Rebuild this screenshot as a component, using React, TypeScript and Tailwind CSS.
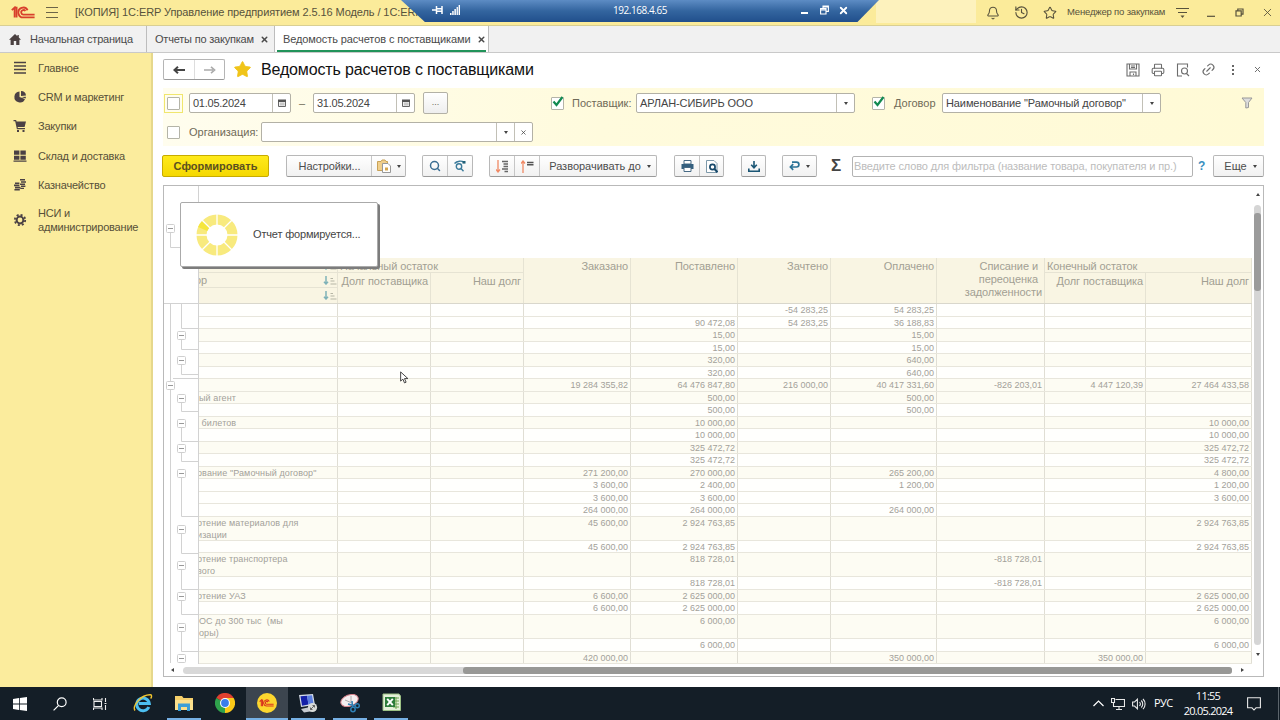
import type { ReactNode } from "react";
import { Bell, History, Link2, Printer, Search, Star, X } from "lucide-react";
import clsx from "clsx";

type Row = {
  h: 12 | 13 | 24;
  tint?: boolean;
  name?: string;
  scrolled?: boolean;
  cells: string[];
};

const columns = [
  "w-[93px]",
  "w-[93px]",
  "w-[107px]",
  "w-[107px]",
  "w-[93px]",
  "w-[106px]",
  "w-[108px]",
  "w-[101px]",
  "w-[106px]",
];

const rows: Row[] = [
  { h: 13, cells: ["", "", "", "", "-54 283,25", "54 283,25", "", "", ""] },
  { h: 12, cells: ["", "", "", "90 472,08", "54 283,25", "36 188,83", "", "", ""] },
  { h: 13, tint: true, cells: ["", "", "", "15,00", "", "15,00", "", "", ""] },
  { h: 12, cells: ["", "", "", "15,00", "", "15,00", "", "", ""] },
  { h: 13, tint: true, cells: ["", "", "", "320,00", "", "640,00", "", "", ""] },
  { h: 12, cells: ["", "", "", "320,00", "", "640,00", "", "", ""] },
  { h: 13, tint: true, cells: ["", "", "19 284 355,82", "64 476 847,80", "216 000,00", "40 417 331,60", "-826 203,01", "4 447 120,39", "27 464 433,58"] },
  { h: 12, tint: true, name: "ый агент", cells: ["", "", "", "500,00", "", "500,00", "", "", ""] },
  { h: 13, cells: ["", "", "", "500,00", "", "500,00", "", "", ""] },
  { h: 12, tint: true, name: " билетов", cells: ["", "", "", "10 000,00", "", "", "", "", "10 000,00"] },
  { h: 13, cells: ["", "", "", "10 000,00", "", "", "", "", "10 000,00"] },
  { h: 12, tint: true, cells: ["", "", "", "325 472,72", "", "", "", "", "325 472,72"] },
  { h: 13, cells: ["", "", "", "325 472,72", "", "", "", "", "325 472,72"] },
  { h: 12, tint: true, scrolled: true, name: "ование \"Рамочный договор\"", cells: ["", "", "271 200,00", "270 000,00", "", "265 200,00", "", "", "4 800,00"] },
  { h: 13, cells: ["", "", "3 600,00", "2 400,00", "", "1 200,00", "", "", "1 200,00"] },
  { h: 12, cells: ["", "", "3 600,00", "3 600,00", "", "", "", "", "3 600,00"] },
  { h: 13, cells: ["", "", "264 000,00", "264 000,00", "", "264 000,00", "", "", ""] },
  { h: 24, tint: true, scrolled: true, name: "ртение материалов для\nизации", cells: ["", "", "45 600,00", "2 924 763,85", "", "", "", "", "2 924 763,85"] },
  { h: 12, cells: ["", "", "45 600,00", "2 924 763,85", "", "", "", "", "2 924 763,85"] },
  { h: 24, tint: true, scrolled: true, name: "ртение транспортера\nвого", cells: ["", "", "", "818 728,01", "", "", "-818 728,01", "", ""] },
  { h: 13, cells: ["", "", "", "818 728,01", "", "", "-818 728,01", "", ""] },
  { h: 12, tint: true, scrolled: true, name: "ртение УАЗ", cells: ["", "", "6 600,00", "2 625 000,00", "", "", "", "", "2 625 000,00"] },
  { h: 13, cells: ["", "", "6 600,00", "2 625 000,00", "", "", "", "", "2 625 000,00"] },
  { h: 24, tint: true, name: "ОС до 300 тыс  (мы\nоры)", cells: ["", "", "", "6 000,00", "", "", "", "", "6 000,00"] },
  { h: 13, cells: ["", "", "", "6 000,00", "", "", "", "", "6 000,00"] },
  { h: 12, tint: true, cells: ["", "", "420 000,00", "", "", "350 000,00", "", "350 000,00", ""] },
];

const rowHeight = { 12: "h-3", 13: "h-[13px]", 24: "h-6" };

const Logo = ({ className, color }: { className: string; color: string }) => (
  <svg viewBox="0 0 24 13" className={className} fill="none" stroke={color} strokeWidth="1.8">
    <path d="M0.8 4.2 L3.6 1.6 V11.6 M3.6 1.6 H5.6 V11.6" />
    <path d="M16.6 4.2 A4.9 4.9 0 1 0 12.8 11.4 H23.6" />
    <path d="M14.4 5 A2.3 2.3 0 1 0 12.8 8.6 H23.6" />
  </svg>
);

const Caret = () => <span className="h-0 w-0 shrink-0 border-x-[2.5px] border-t-[3px] border-x-transparent border-t-[#444]" />;

const TitleBar = () => (
  <header className="relative flex h-[26px] items-center overflow-hidden border-b border-[#d9cf93] bg-[#fbeb9a] text-[#57523c]">
    <Logo className="ml-[11px] h-[13px] w-6" color="#d8402c" />
    <div className="ml-[11px] flex w-3 flex-col gap-1">
      <span className="h-px bg-[#6b6448]" />
      <span className="h-px bg-[#6b6448]" />
      <span className="h-px bg-[#6b6448]" />
    </div>
    <span className="ml-[17px] w-[346px] text-[11px] whitespace-nowrap tracking-[-0.09px]">
      [КОПИЯ] 1С:ERP Управление предприятием 2.5.16 Модель / 1С:ERP
    </span>
    <div className="ml-auto flex h-full w-[404px] items-center">
      <div className="h-[23px] w-[100px] self-start bg-[#fdf2bd]" />
      <Bell className="ml-[10px] h-[14px] w-[14px]" strokeWidth={1.8} />
      <History className="ml-[14px] h-[15px] w-[15px]" strokeWidth={1.8} />
      <Star className="ml-[14px] h-[14px] w-[14px]" strokeWidth={1.8} />
      <span className="ml-[10px] w-[98px] text-[9.5px] whitespace-nowrap tracking-[-0.18px]">Менеджер по закупкам</span>
      <svg viewBox="0 0 13 12" className="ml-[11px] h-3 w-[13px]">
        <path d="M0 1.5 H13 M2 5.5 H11" stroke="#57523c" strokeWidth="1.1" />
        <path d="M4.5 8.5 H8.5 L6.5 11 Z" fill="#57523c" />
      </svg>
      <svg viewBox="0 0 8 8" className="ml-[18px] h-2 w-2">
        <path d="M0 7.3 H8" stroke="#57523c" strokeWidth="1.2" />
      </svg>
      <svg viewBox="0 0 9 9" className="ml-5 h-[9px] w-[9px]" fill="none" stroke="#57523c" strokeWidth="1.2">
        <path d="M1 2.8 H6.2 V8 H1 Z M2.8 2.8 V1 H8 V6.2 H6.2" />
      </svg>
      <X className="ml-[17px] h-[13px] w-[13px]" strokeWidth={1.6} />
    </div>
    <div className="absolute top-0 left-[401px] flex h-[22px] w-[478px] items-center bg-linear-to-b from-[#5d8cc4] via-[#33659f] to-[#214f8c] text-white [clip-path:polygon(0_0,100%_0,95.5%_100%,5%_100%)]">
      <svg viewBox="0 0 12 8" className="mb-[3px] ml-[31px] h-2 w-3" stroke="white" fill="none" strokeWidth="1.5">
        <path d="M0 4 H4 M4.5 0 V8 M10 0 V8 M4.5 2.8 H10 M4.5 5.2 H10" />
      </svg>
      <svg viewBox="0 0 10 10" className="mb-[2px] ml-[6px] h-[10px] w-[10px]" fill="white">
        <path d="M0 8h1.5v2H0z M2.2 6h1.5v4H2.2z M4.4 4h1.5v6H4.4z M6.6 2h1.3v8H6.6z M8.6 0h1.4v10H8.6z" />
      </svg>
      <span className="mb-[2px] ml-[153px] w-[54px] font-['Open_Sans',sans-serif] text-[10px] whitespace-nowrap tracking-[-0.45px]">192.168.4.65</span>
      <span className="mt-[4px] ml-[134px] h-[2px] w-[7px] bg-white" />
      <svg viewBox="0 0 9 10" className="mb-[2px] ml-3 h-[10px] w-[9px]" fill="none" stroke="white" strokeWidth="1.1">
        <path d="M0.6 3.6 H6 V9 H0.6 Z M0.6 5 H6 M3 3.4 V1 H8.4 V6.4 H6.2 M3 2 H8.4" />
      </svg>
      <X className="mb-[2px] ml-[9px] h-[11px] w-[11px]" strokeWidth={4} />
    </div>
  </header>
);

const Tabs = () => (
  <nav className="flex h-[27px] border-b border-[#c9c9c9] bg-[#f1f1f1] text-[11px] text-[#4a4a4a]">
    <div className="flex w-[147px] items-center border-r border-[#bdbdbd]">
      <svg viewBox="0 0 12 11" className="ml-[9px] h-[11px] w-3" fill="#4a4040">
        <path d="M6 0 L0 5.8 H1.6 V11 H4.8 V7 H7.2 V11 H10.4 V5.8 H12 L9.8 3.6 V1 H8.4 V2.3 Z" />
      </svg>
      <span className="ml-[9px] whitespace-nowrap tracking-[-0.2px]">Начальная страница</span>
    </div>
    <div className="flex w-[128px] items-center border-r border-[#bdbdbd]">
      <span className="ml-2 w-[100px] whitespace-nowrap tracking-[-0.2px]">Отчеты по закупкам</span>
      <X className="ml-[5px] h-[9px] w-[9px]" strokeWidth={4} />
    </div>
    <div className="flex w-[214px] items-center border-r border-[#bdbdbd] bg-white px-[2px]">
      <div className="flex h-full w-[210px] items-center border-b-2 border-[#21935a] pt-[2px]">
        <span className="ml-[6px] w-[189px] whitespace-nowrap tracking-[-0.1px]">Ведомость расчетов с поставщиками</span>
        <X className="ml-[5px] h-[9px] w-[9px] shrink-0" strokeWidth={4} />
      </div>
    </div>
  </nav>
);

const menu: { label: string; icon: ReactNode }[] = [
  { label: "Главное", icon: <path d="M1 1.5h12M1 5h12M1 8.5h12M1 12h12" stroke="#4b4144" strokeWidth="1.6" /> },
  { label: "CRM и маркетинг", icon: <path d="M6.5 1.5A5.5 5.5 0 1 0 12 9L6.5 7Z M8 1A5 5 0 0 1 13 5.5L8 6Z M8.5 7L13 6.8 12.6 8.6Z" /> },
  { label: "Закупки", icon: <path d="M0.5 1h2.6l.5 1.4H13L11.6 8H4.6l.3 1H12v1.2H3.9L2.2 2.2H.5Z M4 11h2v2H4z M9.5 11h2v2h-2z" /> },
  { label: "Склад и доставка", icon: <path d="M1 1.5h5.4v4.2H1z M7.4 1.5h5.4v4.2H7.4z M1 6.7h5.4v4H1z M7.4 6.7h5.4v4H7.4z M.5 11.4h13v1.4H.5z" /> },
  { label: "Казначейство", icon: <path d="M7 1h5v1.6H7z M8 3.2h5v1.6H8z M7 5.4h5V7H7z M2 4.4h4.4V6H2z M1 6.6h5.4v1.6H1z M2 8.8h5.4v1.6H2z M1.4 11h5.4v1.6H1.4z M8 7.6h4.4v1.5H8z M7.4 9.8h3.6v1.3H7.4z" /> },
  {
    label: "НСИ и администрирование",
    icon: (
      <g fill="none" stroke="#4b4144">
        <circle cx="7" cy="7" r="3.4" strokeWidth="2" />
        <circle cx="7" cy="7" r="5.2" strokeWidth="1.8" strokeDasharray="2.05 2.03" />
      </g>
    ),
  },
];

const Sidebar = () => (
  <aside className="flex w-[153px] shrink-0 flex-col border-r-2 border-[#e6d88c] bg-[#fbec9d] text-[11px] text-[#575039]">
    {menu.map((item, i) => (
      <div key={item.label} className={clsx("flex items-center", i === 5 ? "mt-px h-10" : "h-[29.3px]")}>
        <svg viewBox="0 0 14 14" className="ml-[13px] h-[14px] w-[14px] shrink-0" fill="#4b4144">
          {item.icon}
        </svg>
        <span className={clsx("ml-[11px] leading-[14px] tracking-[-0.2px]", i === 5 ? "w-[104px]" : "whitespace-nowrap")}>
          {item.label}
        </span>
      </div>
    ))}
  </aside>
);

const PageHeader = () => (
  <div className="flex h-[35px] items-center pb-[2px]">
    <div className="flex h-[21px] w-[62px] rounded-[2px] border border-[#b5b5b5] border-b-[#999] bg-white">
      <div className="flex w-[31px] items-center justify-center border-r border-[#ddd]">
        <svg viewBox="0 0 12 8" className="h-2 w-3">
          <path d="M12 4H3M5 .8L1.4 4 5 7.2" fill="none" stroke="#444" strokeWidth="2" />
        </svg>
      </div>
      <div className="flex flex-1 items-center justify-center">
        <svg viewBox="0 0 12 8" className="h-2 w-3">
          <path d="M0 4H9M7 .8L10.6 4 7 7.2" fill="none" stroke="#aaa" strokeWidth="1.6" />
        </svg>
      </div>
    </div>
    <Star className="ml-2 h-[19px] w-[19px] fill-[#f0c419] text-[#f0c419]" strokeWidth={1} />
    <h1 className="ml-[9px] w-[300px] text-base whitespace-nowrap tracking-[-0.15px] text-[#111]">Ведомость расчетов с поставщиками</h1>
    <div className="ml-auto flex w-[138px] items-center text-[#6d6d6d]">
      <svg viewBox="0 0 14 14" className="h-[14px] w-[14px]" fill="none" stroke="#6d6d6d" strokeWidth="1.1">
        <path d="M1 1H13V13H1Z M3.5 1V6H10.5V1 M5 3H9 M5 4.5H9 M4 13V9H10V13 M7.5 10.5V12" />
      </svg>
      <Printer className="ml-[11px] h-[14px] w-[14px]" strokeWidth={1.8} />
      <svg viewBox="0 0 14 14" className="ml-[11px] h-[14px] w-[14px]" fill="none" stroke="#6d6d6d" strokeWidth="1.1">
        <path d="M6 13H1.5V1H11.5V4.5 M10.5 10.5L13 13" />
        <circle cx="8.5" cy="8" r="3" />
      </svg>
      <Link2 className="ml-[11px] h-[15px] w-[15px] -rotate-45" strokeWidth={1.8} />
      <div className="ml-4 flex flex-col gap-[2px]">
        <span className="h-[2px] w-[2px] bg-[#666]" />
        <span className="h-[2px] w-[2px] bg-[#666]" />
        <span className="h-[2px] w-[2px] bg-[#666]" />
      </div>
      <X className="ml-[19px] h-[9px] w-[9px]" strokeWidth={2.6} />
    </div>
  </div>
);

const Checkbox = ({ checked }: { checked?: boolean }) => (
  <span className="relative h-[13px] w-[13px] shrink-0 rounded-[1px] border border-[#b4b4a8] bg-white">
    {checked && (
      <svg viewBox="0 0 13 12" className="absolute -top-[2px] left-0 h-3 w-[13px]">
        <path d="M1.5 5.5L4.5 9 10.5 1" fill="none" stroke="#128a50" strokeWidth="2.2" />
      </svg>
    )}
  </span>
);

const Field = ({ className, text, children }: { className: string; text?: string; children: ReactNode }) => (
  <div className={clsx("flex h-5 shrink-0 items-stretch overflow-hidden rounded-[2px] border border-[#b3b1a6] bg-white text-[11px] text-[#444]", className)}>
    <span className="flex-1 pl-[3px] leading-[18px] whitespace-nowrap">{text}</span>
    {children}
  </div>
);

const FieldButton = ({ children }: { children: ReactNode }) => (
  <span className="flex w-[18px] items-center justify-center border-l border-[#c2c0b6]">{children}</span>
);

const CalendarIcon = () => (
  <svg viewBox="0 0 8 8" className="h-2 w-2">
    <path d="M.5 1.5H7.5V7.5H.5Z" fill="#eee" stroke="#666" />
    <path d="M0 .5H8V3H0Z" fill="#555" />
    <path d="M2 4.2H6.5M2 5.8H6.5" stroke="#aaa" strokeWidth=".8" />
  </svg>
);

const Filters = () => (
  <div className="flex h-[58px] flex-col bg-linear-to-r from-[#fffdee] via-[#fffbdd] via-40% to-[#fffad6] text-[11px] text-[#6f6a58]">
    <div className="flex h-[30px] items-center">
      <span className="ml-[1px] flex h-[19px] w-[19px] items-center justify-center border border-[#f0e66e]">
        <Checkbox />
      </span>
      <Field className="ml-[6px] w-[102px] tracking-[-0.25px]" text="01.05.2024">
        <FieldButton><CalendarIcon /></FieldButton>
      </Field>
      <span className="w-[22px] text-center">–</span>
      <Field className="w-[102px] tracking-[-0.25px]" text="31.05.2024">
        <FieldButton><CalendarIcon /></FieldButton>
      </Field>
      <div className="ml-2 flex h-[22px] w-[25px] justify-center rounded-[2px] border border-[#b3b1a6] bg-linear-to-b from-white to-[#eee] text-[9px] leading-[18px]">...</div>
      <div className="ml-[103px] flex items-center">
        <Checkbox checked />
        <span className="ml-2 w-[64px] whitespace-nowrap">Поставщик:</span>
      </div>
      <Field className="w-[219px] tracking-[-0.1px]" text="АРЛАН-СИБИРЬ ООО">
        <FieldButton><Caret /></FieldButton>
      </Field>
      <div className="ml-[17px] flex items-center">
        <Checkbox checked />
        <span className="ml-[9px] w-[48px]">Договор</span>
      </div>
      <Field className="w-[219px] tracking-[-0.1px]" text={"Наименование \"Рамочный договор\""}>
        <FieldButton><Caret /></FieldButton>
      </Field>
      <svg viewBox="0 0 12 12" className="ml-[80px] h-3 w-3" fill="#ddd" stroke="#999" strokeWidth="1">
        <path d="M1 1H11L7.5 5.5V10.5L4.8 11V5.5Z" />
      </svg>
    </div>
    <div className="flex h-[28px] items-center">
      <span className="ml-[4px] flex"><Checkbox /></span>
      <span className="ml-[9px] w-[72px] whitespace-nowrap">Организация:</span>
      <Field className="w-[272px]">
        <FieldButton><Caret /></FieldButton>
        <FieldButton><X className="h-[7px] w-[7px]" strokeWidth={2.6} /></FieldButton>
      </Field>
    </div>
  </div>
);

const ButtonGroup = ({ className, children }: { className: string; children: ReactNode }) => (
  <div className={clsx("flex h-[22px] shrink-0 items-stretch divide-x divide-[#c6c6c6] rounded-[2px] border border-[#b8b8b8] border-b-[#9a9a9a] bg-linear-to-b from-white to-[#f1f1f1]", className)}>
    {children}
  </div>
);

const Slot = ({ className, children }: { className: string; children: ReactNode }) => (
  <div className={clsx("flex items-center justify-center", className)}>{children}</div>
);

const Toolbar = () => (
  <div className="flex h-[22px] items-center text-[11px] text-[#4d4d4d]">
    <button className="-ml-px h-[22px] w-[107px] rounded-[2px] border border-[#c7ab00] bg-linear-to-b from-[#ffea1a] to-[#f5d800] font-bold whitespace-nowrap text-[#5b5020]">
      Сформировать
    </button>
    <ButtonGroup className="ml-[17px] w-[120px]">
      <Slot className="w-[85px] pr-px pl-[2px] tracking-[-0.1px]">Настройки...</Slot>
      <Slot className="flex-1 gap-[6px]">
        <svg viewBox="0 0 14 14" className="h-[14px] w-[14px]">
          <path d="M.5 2.5H4L5 1H8L9 2.5H10.5V11.5H.5Z" fill="#f0cf8c" stroke="#c9a257" />
          <path d="M5.5 4.5H11L13.5 7V13.5H5.5Z" fill="#fff" stroke="#999" />
          <path d="M8 8.5H11V11.5H8Z" fill="#d6a64e" />
        </svg>
        <Caret />
      </Slot>
    </ButtonGroup>
    <ButtonGroup className="ml-4 w-[51px]">
      <Slot className="w-[25px]"><Search className="h-3 w-3 text-[#3a6d92]" strokeWidth={3} /></Slot>
      <Slot className="flex-1">
        <svg viewBox="0 0 12 12" className="h-3 w-3" fill="none" stroke="#3a7a9a" strokeWidth="1.4">
          <circle cx="5" cy="6.5" r="2.7" />
          <path d="M7 8.6L9.5 11.2 M.5 3.5C3 .6 8 .6 10 2.4" />
          <path d="M8.5 1H11.5V3.6H8.5Z" fill="#1f6078" stroke="none" />
        </svg>
      </Slot>
    </ButtonGroup>
    <ButtonGroup className="ml-4 w-[168px]">
      <Slot className="w-[25px]">
        <svg viewBox="0 0 13 13" className="h-[13px] w-[13px]">
          <path d="M2 0V12M0 9.5L2 12 4 9.5" fill="none" stroke="#f08a66" strokeWidth="1.3" />
          <path d="M6 1.5H12M7.5 4H12M7.5 6.5H12M6 9H12M8.5 11.5H12" stroke="#666" strokeWidth="1.4" />
        </svg>
      </Slot>
      <Slot className="w-[25px]">
        <svg viewBox="0 0 13 13" className="h-[13px] w-[13px]">
          <path d="M2 13V1M0 3.5L2 1 4 3.5" fill="none" stroke="#f08a66" strokeWidth="1.3" />
          <path d="M6 2.5H12.5M6 4.7H12.5" stroke="#555" strokeWidth="1.4" />
        </svg>
      </Slot>
      <Slot className="flex-1 gap-[6px] pl-1 whitespace-nowrap">Разворачивать до <Caret /></Slot>
    </ButtonGroup>
    <ButtonGroup className="ml-[17px] w-[50px]">
      <Slot className="w-[25px]">
        <svg viewBox="0 0 13 12" className="h-3 w-[13px]">
          <path d="M3 .5H10V4H3Z" fill="#fff" stroke="#476a85" />
          <path d="M.5 4H12.5V9H.5Z" fill="#34607f" />
          <path d="M3 7.5H10V11.5H3Z" fill="#fff" stroke="#476a85" />
        </svg>
      </Slot>
      <Slot className="flex-1">
        <svg viewBox="0 0 12 13" className="h-[13px] w-3" fill="none">
          <path d="M.5 .5H8L11 3.5V12.5H.5Z" fill="#fff" stroke="#7d99aa" />
          <circle cx="6.5" cy="7" r="2.6" stroke="#17496b" strokeWidth="1.7" />
          <path d="M8.5 9L11.5 12.3" stroke="#17496b" strokeWidth="2" />
        </svg>
      </Slot>
    </ButtonGroup>
    <ButtonGroup className="ml-[17px] w-[25px]">
      <Slot className="flex-1">
        <svg viewBox="0 0 12 11" className="h-[11px] w-3" fill="none" stroke="#1b5675" strokeWidth="1.6">
          <path d="M6 0V6M3.2 3.8L6 6.8 8.8 3.8M.8 7.5V10.2H11.2V7.5" />
        </svg>
      </Slot>
    </ButtonGroup>
    <ButtonGroup className="ml-4 w-[35px]">
      <Slot className="flex-1 gap-[6px]">
        <svg viewBox="0 0 11 10" className="h-[10px] w-[11px]" fill="none" stroke="#2b7397" strokeWidth="1.7">
          <path d="M3 1.2H7.5A2.2 2.2 0 0 1 7.5 6H1.5M4.2 3.2L1.4 6 4.2 8.8" />
        </svg>
        <Caret />
      </Slot>
    </ButtonGroup>
    <span className="w-[35px] shrink-0 pl-[3px] text-center text-[17px] font-bold text-[#444]">Σ</span>
    <div className="h-[21px] w-[341px] shrink-0 overflow-hidden rounded-[2px] border border-[#b3b3b3] bg-white pl-px leading-[19px] whitespace-nowrap tracking-[-0.14px] text-[#bcbcbc]">
      Введите слово для фильтра (название товара, покупателя и пр.)
    </div>
    <span className="w-[20px] shrink-0 pl-[5px] text-xs font-bold text-[#3a8fc0]">?</span>
    <ButtonGroup className="w-[51px]">
      <Slot className="flex-1 gap-[6px] pl-1">Еще <Caret /></Slot>
    </ButtonGroup>
  </div>
);

// Collapsible group markers: y of the toggle and y where its bracket ends
const groups = [
  { y: 149, end: 163 },
  { y: 174, end: 188 },
  { y: 212, end: 225 },
  { y: 237, end: 255 },
  { y: 262, end: 275 },
  { y: 287, end: 330 },
  { y: 343, end: 367 },
  { y: 379, end: 403 },
  { y: 410, end: 428 },
  { y: 441, end: 465 },
  { y: 472, end: 477 },
];

const Toggle = ({ x, y }: { x: number; y: number }) => (
  <g>
    <rect x={x - 4} y={y - 4} width="8" height="8" rx="1" fill="#fff" stroke="#cfcfcf" />
    <path d={`M${x - 2.5} ${y}H${x + 2.5}`} stroke="#999" />
  </g>
);

const GroupTree = () => (
  <div className="w-[35px] shrink-0 border-r border-[#d2d2d2]">
    <svg viewBox="0 0 34 477" className="h-[477px] w-[34px]" fill="none" stroke="#d2d2d2">
      <path d="M6.5 43V61.5H34 M0 117.5H34 M6.5 118V477 M17.5 118V142.5H34" />
      {groups.map((g) => (
        <path key={g.y} d={`M17.5 ${g.y}V${g.end}.5H34`} />
      ))}
      <path d="M9 192.5H34" />
      {groups.map((g) => (
        <Toggle key={g.y} x={17.5} y={g.y + 0.5} />
      ))}
      <Toggle x={6.5} y={42.5} />
      <Toggle x={6.5} y={199.5} />
    </svg>
  </div>
);

const SortIcon = () => (
  <svg viewBox="0 0 14 9" className="h-[9px] w-[14px] shrink-0" fill="none">
    <path d="M3 0V8M1 5.8L3 8 5 5.8" stroke="#7fb2b8" strokeWidth="1.5" />
    <path d="M7.5 2.5H10M7.5 5H11.5M7.5 8H13.5" stroke="#b5b5a5" />
  </svg>
);

const HeadCell = ({ className, children }: { className: string; children?: ReactNode }) => (
  <div className={clsx("border-r border-[#e6e3d3] pt-[2px] pr-[2px] text-right leading-[13px]", className)}>{children}</div>
);

const BalanceHead = ({ title, left, right }: { title: string; left: string; right: string }) => (
  <div className="flex flex-col">
    <div className="h-[15px] border-r border-b border-[#e6e3d3] pt-[2px] pl-[2px] leading-[13px]">{title}</div>
    <div className="flex flex-1">
      <HeadCell className={left}>Долг поставщика</HeadCell>
      <HeadCell className={right}>Наш долг</HeadCell>
    </div>
  </div>
);

const ReportTable = () => (
  <div className="w-[1053px] overflow-hidden pt-[72px]">
    <div className="flex h-[46px] border-b border-[#d9d7cc] bg-[#f9f5e3] text-[11px] whitespace-nowrap tracking-[-0.08px] text-[#a29f93]">
      <div className="flex w-[139px] flex-col border-r border-[#e6e3d3]">
        <div className="flex h-[15px] items-center justify-end border-b border-[#e6e3d3]"><SortIcon /></div>
        <div className="flex h-[15px] items-center justify-between border-b border-[#e6e3d3]">
          <span className="-ml-[4px]">ор</span>
          <SortIcon />
        </div>
        <div className="flex h-[15px] items-center justify-end"><SortIcon /></div>
      </div>
      <BalanceHead title="Начальный остаток" left="w-[93px]" right="w-[93px]" />
      <HeadCell className="w-[107px]">Заказано</HeadCell>
      <HeadCell className="w-[107px]">Поставлено</HeadCell>
      <HeadCell className="w-[93px]">Зачтено</HeadCell>
      <HeadCell className="w-[106px]">Оплачено</HeadCell>
      <HeadCell className="w-[108px]">
        <span className="pr-1">Списание и</span><br />
        <span className="pr-1">переоценка</span><br />
        задолженности
      </HeadCell>
      <BalanceHead title="Конечный остаток" left="w-[101px]" right="w-[106px]" />
    </div>
    {rows.map((row, i) => (
      <div
        key={i}
        className={clsx(
          "flex border-b border-[#e8e6dc] text-[9px] leading-3 text-[#a3a19a]",
          rowHeight[row.h],
          row.tint ? "bg-[#fdfcf3]" : "bg-[#fffffd]",
        )}
      >
        <div className="w-[139px] overflow-hidden border-r border-[#e0ded4] whitespace-pre tracking-[0.1px]">
          <span className={clsx("block", row.scrolled && "-ml-[2px]")}>{row.name}</span>
        </div>
        {row.cells.map((cell, c) => (
          <div key={c} className={clsx("border-r border-[#e0ded4] pr-[2px] text-right whitespace-nowrap", columns[c])}>
            {cell}
          </div>
        ))}
      </div>
    ))}
  </div>
);

const Progress = () => (
  <div className="absolute top-4 left-4 flex h-[65px] w-[198px] items-center rounded-[2px] border border-[#aaa] bg-white shadow-[2px_2px_0_#7c7c7c]">
    <svg viewBox="0 0 42 42" className="ml-[15px] h-[42px] w-[42px]" fill="none" strokeWidth="10">
      <circle cx="21" cy="21" r="15.5" stroke="#f8ea7e" />
      <path d="M6.7 15A15.5 15.5 0 0 1 10 10" stroke="#f5e63d" />
      <path d="M21 0V42M0 21H42M6.2 6.2L35.8 35.8M35.8 6.2L6.2 35.8" stroke="#fff" strokeWidth="1.3" />
    </svg>
    <span className="ml-[15px] text-[11px] whitespace-nowrap tracking-[-0.17px] text-[#444]">Отчет формируется...</span>
  </div>
);

const Report = () => (
  <section className="relative flex h-[492px] w-[1101px] flex-col border border-[#b9b9b9] bg-white">
    <div className="flex h-[478px]">
      <GroupTree />
      <ReportTable />
      <div className="flex w-[11px] flex-col items-center">
        <span className="mt-[7px] border-x-2 border-b-[3px] border-x-transparent border-b-[#444]" />
        <div className="mt-[9px] h-[440px] w-[7px] rounded-full bg-[#d5d5d5] pt-2">
          <div className="h-[78px] rounded-[3px] bg-[#9b9b9b]" />
        </div>
        <span className="mt-[8px] border-x-[2.5px] border-t-[3px] border-x-transparent border-t-[#444]" />
      </div>
    </div>
    <div className="flex h-3 items-center">
      <span className="ml-[7px] border-y-2 border-r-[3px] border-y-transparent border-r-[#444]" />
      <div className="ml-[9px] flex h-[7px] w-[1049px] justify-end rounded-full bg-[#d8d8d8]">
        <div className="w-[769px] rounded-[3px] bg-[#989896]" />
      </div>
      <span className="ml-[9px] border-y-2 border-l-[3px] border-y-transparent border-l-[#444]" />
    </div>
    <Progress />
    <svg viewBox="0 0 10 14" className="absolute top-[185px] left-[236px] h-[13px] w-[9px]">
      <path d="M.7 .8V11L3.2 8.8 5 13 6.8 12.2 5 8.2H8.8Z" fill="#fff" stroke="#333" />
    </svg>
  </section>
);

const TaskButton = ({ active, running, children }: { active?: boolean; running?: boolean; children: ReactNode }) => (
  <div className={clsx("flex w-[41.4px] flex-col items-center", active && "bg-[#3c454f]")}>
    <div className="flex flex-1 items-center">{children}</div>
    <span className={clsx("h-[2px]", active ? "w-full" : "w-[34px]", running && "bg-[#76b0e4]")} />
  </div>
);

const Taskbar = () => (
  <footer className="flex h-[33px] bg-[#141e27] text-white">
    <div className="flex w-[122px] items-center">
      <svg viewBox="0 0 14 14" className="ml-[13px] h-[14px] w-[14px]" fill="#fff">
        <path d="M0 2L6 1.1V6.6H0Z M6.8 1L14 0V6.6H6.8Z M0 7.4H6V12.9L0 12Z M6.8 7.4H14V14L6.8 13Z" />
      </svg>
      <svg viewBox="0 0 14 14" className="ml-[26px] h-[14px] w-[14px]" fill="none" stroke="#fff" strokeWidth="1.2">
        <circle cx="8.7" cy="5.3" r="4.4" />
        <path d="M5.4 8.6L.6 13.4" />
      </svg>
      <svg viewBox="0 0 14 14" className="ml-[26px] h-[14px] w-[14px]" fill="none" stroke="#eee" strokeWidth="1.1">
        <path d="M.5 1V3H9V1M1 4.5H8.5V9.5H1ZM.5 13V11H9V13M12.5 1V5M12.5 8V13M11.5 6.5H13.5" />
      </svg>
    </div>
    <TaskButton>
      <svg viewBox="0 0 20 20" className="h-5 w-5" fill="none">
        <path d="M15.8 14A6.3 6.3 0 1 1 16.3 10.6H6" stroke="#4cbff0" strokeWidth="3" />
        <path d="M2 17.5C-1 13 8 1.5 17.5 1.8C19 2 18.8 4 17.6 5.5" stroke="#f2c530" strokeWidth="1.4" />
      </svg>
    </TaskButton>
    <TaskButton running>
      <svg viewBox="0 0 18 16" className="h-4 w-[18px]">
        <path d="M0 1H7L8.5 3H18V15H0Z" fill="#f6d06b" />
        <path d="M0 5H18V15H0Z" fill="#fce08c" />
        <path d="M3 8.5H15V16H12V12H6V16H3Z" fill="#3c9fd8" />
      </svg>
    </TaskButton>
    <TaskButton>
      <svg viewBox="0 0 20 20" className="h-5 w-5">
        <path d="M10 10L1.3 5A10 10 0 0 1 18.7 5Z" fill="#e0402f" />
        <path d="M10 10L1.3 5A10 10 0 0 0 10 20L14 12Z" fill="#2fa24c" />
        <path d="M10 10L10 5H18.7A10 10 0 0 1 10 20Z" fill="#fbc918" />
        <circle cx="10" cy="10" r="5" fill="#fff" />
        <circle cx="10" cy="10" r="3.9" fill="#3b7ded" />
      </svg>
    </TaskButton>
    <TaskButton active running>
      <div className="flex h-5 w-5 items-center justify-center rounded-full bg-[#fcd62e]">
        <Logo className="h-[8px] w-[15px]" color="#d9341f" />
      </div>
    </TaskButton>
    <TaskButton running>
      <svg viewBox="0 0 20 20" className="h-5 w-5">
        <path d="M1 2L15 1L17 12L3 14Z" fill="#d4dbe6" />
        <path d="M2.5 3.2L9 2.7L10.5 11.6L4 12.7Z" fill="#1420a8" />
        <path d="M9 2.7L14 2.3L15.5 11L10.5 11.6Z" fill="#5b7fe0" />
        <path d="M3 16L12 14L15 18L6 19.5Z" fill="#c5c9cf" />
        <circle cx="14.5" cy="14.5" r="4.6" fill="#d9dbd8" />
        <path d="M12.5 16.5L16.5 12.5M12.5 14.5V16.5H14.5M14.5 12.5H16.5V14.5" fill="none" stroke="#555" strokeWidth=".9" />
      </svg>
    </TaskButton>
    <TaskButton running>
      <svg viewBox="0 0 20 20" className="h-5 w-5">
        <ellipse cx="9.5" cy="7.5" rx="9" ry="5.6" fill="#f5eff0" stroke="#d8838c" transform="rotate(-20 9.5 7.5)" />
        <path d="M5 7L12 10M11 3L11 9" stroke="#999" strokeWidth=".8" />
        <g fill="none" stroke="#2f7fb4" strokeWidth="1.5">
          <circle cx="13" cy="16.5" r="2.2" />
          <circle cx="17.3" cy="12.8" r="2" />
          <path d="M12.6 14.3L12 8M15.4 13L8 11" />
        </g>
      </svg>
    </TaskButton>
    <TaskButton running>
      <svg viewBox="0 0 19 19" className="h-[19px] w-[19px]">
        <path d="M1 1H17L18.5 3V17.5H1Z" fill="#e4f0d9" stroke="#9cc184" />
        <path d="M11 5H17M11 8H17M11 11H17M11 14H17M14 4V16" stroke="#6fa552" />
        <path d="M3 4H13V14H3Z" fill="#2c7c3a" />
        <path d="M5.2 5.8L10.8 12.2M10.8 5.8L5.2 12.2" stroke="#fff" strokeWidth="1.9" />
      </svg>
    </TaskButton>
    <div className="ml-auto flex w-[188px] items-center font-['Open_Sans',sans-serif] text-[11px]">
      <svg viewBox="0 0 11 7" className="ml-[1px] h-[7px] w-[11px]" fill="none" stroke="#fff" strokeWidth="1.2">
        <path d="M.5 6L5.5 1L10.5 6" />
      </svg>
      <svg viewBox="0 0 14 12" className="ml-[7px] h-3 w-[14px]" fill="none" stroke="#e8e8e8" strokeWidth="1.1">
        <path d="M4.5 1.5H13.5V8.5H2.5V5M.5 .5H3.5V4.5H.5ZM8 8.5V11.5M5 11.5H11" />
      </svg>
      <svg viewBox="0 0 14 12" className="ml-[7px] h-3 w-[14px]" fill="none" stroke="#e8e8e8" strokeWidth="1.1">
        <path d="M.6 4H2.6L5.4 1.2V10.8L2.6 8H.6ZM7.5 4A3 3 0 0 1 7.5 8M9.3 2.5A5 5 0 0 1 9.3 9.5M11 1A7 7 0 0 1 11 11" />
      </svg>
      <span className="ml-2 w-[20px] tracking-[-0.6px]">РУС</span>
      <div className="ml-2 w-[52px] pb-[2px] text-center leading-[15px] whitespace-nowrap tracking-[-0.75px]">
        <div>11:55</div>
        <div>20.05.2024</div>
      </div>
      <svg viewBox="0 0 14 14" className="ml-[13px] h-[14px] w-[14px]" fill="none" stroke="#e8e8e8" strokeWidth="1.1">
        <path d="M.6 .8H13.4V10.8H9L7 13L5 10.8H.6Z" />
      </svg>
      <span className="ml-[17px] h-[33px] w-px bg-[#5b646b]" />
    </div>
  </footer>
);

const App = () => {
  return (
    <div className="flex h-[720px] w-[1280px] flex-col overflow-hidden bg-white font-['Liberation_Sans',Arial,sans-serif]">
      <TitleBar />
      <Tabs />
      <div className="flex h-[634px]">
        <Sidebar />
        <main className="flex w-[1111px] flex-col pl-[10px]">
          <PageHeader />
          <Filters />
          <div className="mt-[9px] mb-2">
            <Toolbar />
          </div>
          <Report />
        </main>
      </div>
      <Taskbar />
    </div>
  );
};

export default App;
